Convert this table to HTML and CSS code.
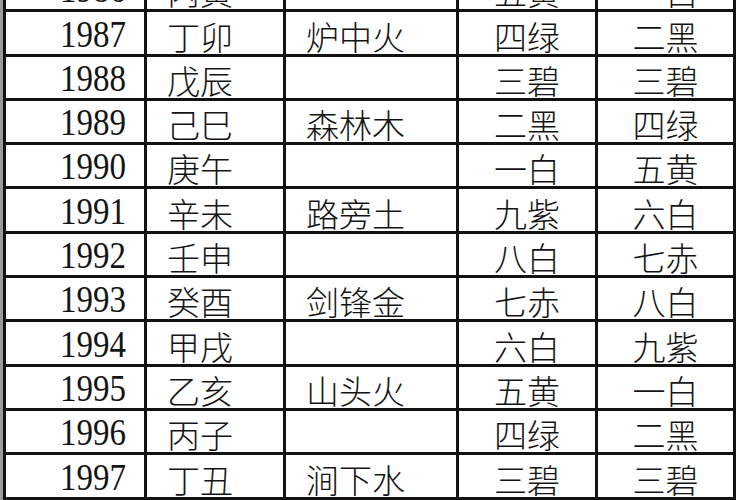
FILE: index.html
```html
<!DOCTYPE html>
<html lang="zh-CN">
<head>
<meta charset="utf-8">
<title>年份九星表</title>
<link rel="stylesheet" href="styles.css">
</head>
<body>
<div class="sheet">
<table class="grid">
<colgroup>
<col class="c-year"><col class="c-gz"><col class="c-ny"><col class="c-m"><col class="c-f">
</colgroup>
<tbody>
<tr><td class="year"><span class="num">1986</span></td><td class="gz">丙寅</td><td class="ny"></td><td class="star">五黄</td><td class="star">一白</td></tr>
<tr><td class="year"><span class="num">1987</span></td><td class="gz">丁卯</td><td class="ny">炉中火</td><td class="star">四绿</td><td class="star">二黑</td></tr>
<tr><td class="year"><span class="num">1988</span></td><td class="gz">戊辰</td><td class="ny"></td><td class="star">三碧</td><td class="star">三碧</td></tr>
<tr><td class="year"><span class="num">1989</span></td><td class="gz">己巳</td><td class="ny">森林木</td><td class="star">二黑</td><td class="star">四绿</td></tr>
<tr><td class="year"><span class="num">1990</span></td><td class="gz">庚午</td><td class="ny"></td><td class="star">一白</td><td class="star">五黄</td></tr>
<tr><td class="year"><span class="num">1991</span></td><td class="gz">辛未</td><td class="ny">路旁土</td><td class="star">九紫</td><td class="star">六白</td></tr>
<tr><td class="year"><span class="num">1992</span></td><td class="gz">壬申</td><td class="ny"></td><td class="star">八白</td><td class="star">七赤</td></tr>
<tr><td class="year"><span class="num">1993</span></td><td class="gz">癸酉</td><td class="ny">剑锋金</td><td class="star">七赤</td><td class="star">八白</td></tr>
<tr><td class="year"><span class="num">1994</span></td><td class="gz">甲戌</td><td class="ny"></td><td class="star">六白</td><td class="star">九紫</td></tr>
<tr><td class="year"><span class="num">1995</span></td><td class="gz">乙亥</td><td class="ny">山头火</td><td class="star">五黄</td><td class="star">一白</td></tr>
<tr><td class="year"><span class="num">1996</span></td><td class="gz">丙子</td><td class="ny"></td><td class="star">四绿</td><td class="star">二黑</td></tr>
<tr><td class="year"><span class="num">1997</span></td><td class="gz">丁丑</td><td class="ny">涧下水</td><td class="star">三碧</td><td class="star">三碧</td></tr>
<tr><td class="year"><span class="num">1998</span></td><td class="gz">戊寅</td><td class="ny"></td><td class="star">二黑</td><td class="star">四绿</td></tr>
</tbody>
</table>
</div>
</body>
</html>
```
FILE: styles.css
```css
html, body {
  margin: 0;
  padding: 0;
  background: #ffffff;
  overflow: hidden;
}
.sheet {
  width: 750px;
  height: 500px;
  overflow: hidden;
  border-left: 3px solid #9a9a9a;
  box-sizing: border-box;
}
.grid {
  border-collapse: collapse;
  table-layout: fixed;
  width: 733px;
  margin-top: -35px;
  font-family: "Noto Sans CJK SC", "Noto Sans CJK JP", sans-serif;
  font-size: 33px;
  font-weight: 300;
  color: #141414;
}
.c-year { width: 141px; }
.c-gz { width: 139px; }
.c-ny { width: 173px; }
.c-m { width: 139px; }
.c-f { width: 138px; }
.grid td {
  border: 3px solid #121212;
  height: 44.3px;
  padding: 0 0 1px 0;
  vertical-align: bottom;
  line-height: 1;
  white-space: nowrap;
  box-sizing: border-box;
}
.year {
  text-align: right;
  padding-right: 18px !important;
  font-family: "Liberation Serif", "Times New Roman", serif;
  font-size: 33px;
}
.num {
  display: inline-block;
  transform: scaleY(1.13);
  transform-origin: 50% 80%;
}
.gz, .ny {
  text-align: left;
  padding-left: 20px !important;
}
.star {
  text-align: center;
}
```
